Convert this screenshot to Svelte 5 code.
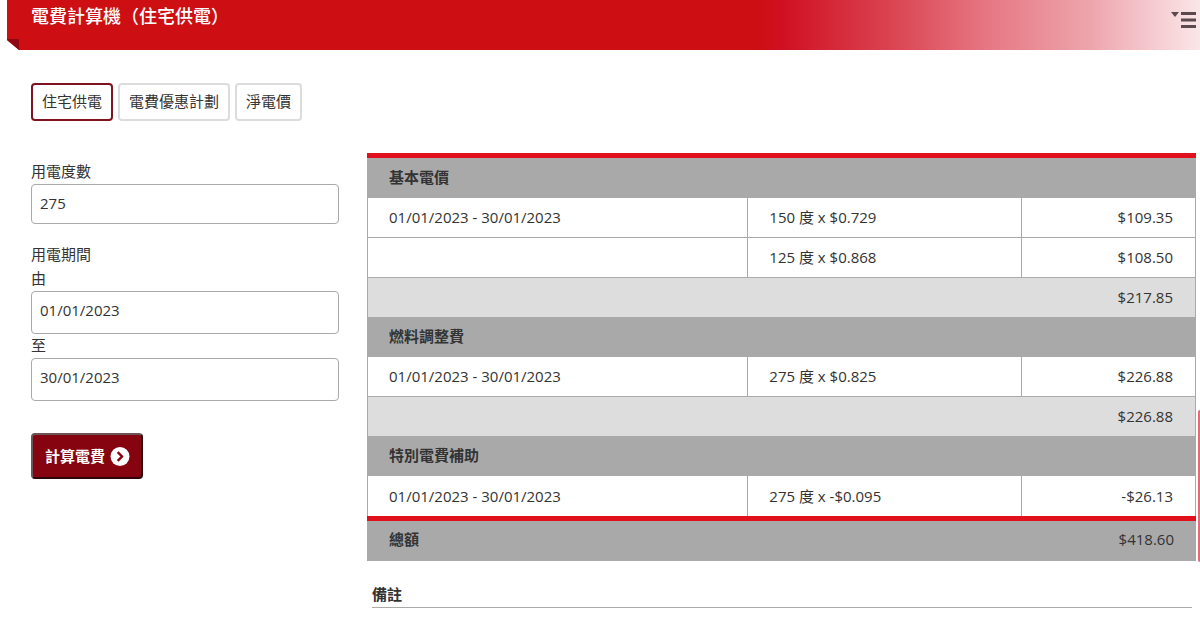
<script>
  const tabs = ['住宅供電', '電費優惠計劃', '淨電價'];
  let active = $state(0);
  let units = $state('275');
  let from = $state('01/01/2023');
  let to = $state('30/01/2023');

  const period = '01/01/2023 - 30/01/2023';
  const sections = [
    {
      title: '基本電價',
      rows: [
        [period, '150 度 x $0.729', '$109.35'],
        ['', '125 度 x $0.868', '$108.50']
      ],
      subtotal: '$217.85'
    },
    {
      title: '燃料調整費',
      rows: [[period, '275 度 x $0.825', '$226.88']],
      subtotal: '$226.88'
    },
    {
      title: '特別電費補助',
      rows: [[period, '275 度 x -$0.095', '-$26.13']],
      subtotal: null
    }
  ];
</script>

<header>
  <h1>電費計算機（住宅供電）</h1>
  <button class="menu" type="button" aria-label="選單">
    <svg width="26" height="18" viewBox="0 0 26 18" aria-hidden="true">
      <path d="M0 1h8L4 6z" fill="#5b4a4d" />
      <path d="M10 1h15v3H10zM10 7.5h15v3H10zM10 14h15v3H10z" fill="#5b4a4d" />
    </svg>
  </button>
</header>

<main>
  <nav>
    {#each tabs as tab, i}
      <button type="button" class="tab" class:active={active === i} onclick={() => (active = i)}>{tab}</button>
    {/each}
  </nav>

  <div class="columns">
    <form onsubmit={(e) => e.preventDefault()}>
      <div class="field">
        <label for="units">用電度數</label>
        <input id="units" type="text" bind:value={units} />
      </div>
      <fieldset>
        <legend>用電期間</legend>
        <label for="from">由</label>
        <input id="from" class="date" type="text" bind:value={from} />
        <label for="to">至</label>
        <input id="to" class="date" type="text" bind:value={to} />
      </fieldset>
      <button class="submit" type="submit">
        計算電費
        <svg width="20" height="20" viewBox="0 0 20 20" aria-hidden="true">
          <circle cx="10" cy="10.5" r="9.5" fill="#fff" />
          <path d="M7.7 6.1 12 10.5l-4.3 4.4" fill="none" stroke="#85040f" stroke-width="2.4" />
        </svg>
      </button>
    </form>

    <section>
      <table>
        <colgroup>
          <col class="c-period" />
          <col class="c-rate" />
          <col />
        </colgroup>
        {#each sections as s}
          <tbody>
            <tr class="head"><th colspan="3">{s.title}</th></tr>
            {#each s.rows as r}
              <tr class="row">
                <td>{r[0]}</td>
                <td>{r[1]}</td>
                <td class="amount">{r[2]}</td>
              </tr>
            {/each}
            {#if s.subtotal}
              <tr class="sub"><td colspan="3" class="amount">{s.subtotal}</td></tr>
            {/if}
          </tbody>
        {/each}
        <tfoot>
          <tr class="total">
            <th colspan="2">總額</th>
            <td class="amount">$418.60</td>
          </tr>
        </tfoot>
      </table>
      <h2>備註</h2>
    </section>
  </div>
</main>

<div class="side-tab"></div>

<style>
  :global(body) {
    background: #fff;
    color: #333;
    font: 15px/24px 'Open Sans', 'Noto Sans CJK TC', sans-serif;
    overflow: hidden;
  }
  :global(*) {
    box-sizing: border-box;
  }
  button,
  input {
    font: inherit;
    color: inherit;
  }
  header {
    position: relative;
    display: flex;
    justify-content: space-between;
    align-items: flex-start;
    height: 50px;
    margin-left: 7px;
    padding: 4px 3px 0 24px;
    background: linear-gradient(90deg, #cd0f14 0, #cd0f14 63%, #d01022 65%, #da4350 74%, #e67682 82%, #eea6ad 91%, #f4c3ca 95%, #fae6e7 100%);
    clip-path: polygon(0 0, 100% 0, 100% 100%, 12px 100%, 0 40px);
  }
  header::before {
    content: '';
    position: absolute;
    left: 0;
    bottom: 0;
    width: 12px;
    height: 11px;
    background: #8d0810;
  }
  h1 {
    margin: 0;
    color: #fff;
    font-size: 18px;
    font-weight: 500;
    line-height: 24px;
  }
  .menu {
    display: flex;
    margin-top: 7px;
    padding: 0;
    border: 0;
    background: none;
  }
  main {
    padding: 33px 4px 0 31px;
  }
  nav {
    display: flex;
    gap: 5px;
  }
  .tab {
    height: 38px;
    padding: 0 9px 2px;
    border: 2px solid #dcdcdc;
    border-radius: 4px;
    background: #fff;
    line-height: 24px;
  }
  .tab.active {
    border-color: #7e1220;
  }
  .columns {
    display: grid;
    grid-template-columns: 308fr 829fr;
    column-gap: 28px;
    margin-top: 32px;
  }
  form {
    padding-top: 7px;
  }
  .field {
    margin-bottom: 19px;
  }
  label,
  legend {
    display: block;
    padding: 0 0 2px;
    line-height: 22px;
  }
  input {
    display: block;
    width: 100%;
    height: 40px;
    padding: 0 8px 2px;
    border: 1px solid #aaa;
    border-radius: 4px;
    background: #fff;
  }
  .date {
    height: 43px;
    padding-bottom: 6px;
  }
  fieldset {
    margin: 0;
    padding: 0;
    border: 0;
  }
  .submit {
    display: flex;
    align-items: center;
    gap: 5px;
    height: 46px;
    margin-top: 32px;
    padding: 0 11px 1px 12px;
    border: 2px solid;
    border-color: #6b5558 #2e0508 #2e0508 #6b5558;
    border-radius: 4px;
    background: #85040f;
    color: #fff;
    font-weight: 700;
  }
  table {
    width: 100%;
    border-collapse: separate;
    border-spacing: 0;
    border-top: 5px solid #e0101c;
    table-layout: fixed;
  }
  .c-period {
    width: 46%;
  }
  .c-rate {
    width: 33%;
  }
  th,
  td {
    height: 40px;
    padding: 0 22px 2px;
    text-align: left;
    line-height: 24px;
  }
  .head th,
  .total > * {
    background: #a9a9a9;
  }
  .row td {
    padding-left: 21px;
    padding-bottom: 1px;
    border-right: 1px solid #aaa;
    border-bottom: 1px solid #aaa;
  }
  .row td:first-child,
  .sub td {
    border-left: 1px solid #aaa;
  }
  .sub td {
    height: 39px;
    border-right: 1px solid #aaa;
    background: #ddd;
  }
  tbody:last-of-type .row td {
    border-bottom: 0;
  }
  .total > * {
    height: 45px;
    padding-bottom: 4px;
    border-top: 5px solid #e0101c;
  }
  td.amount {
    text-align: right;
  }
  h2 {
    margin: 21px 4px 0 5px;
    padding-bottom: 1px;
    border-bottom: 1px solid #aaa;
    font-size: 15px;
    font-weight: 700;
    line-height: 24px;
  }
  .side-tab {
    position: fixed;
    right: 0;
    top: 410px;
    width: 2px;
    height: 152px;
    border-radius: 2px 0 0 2px;
    background: #e8687c;
  }
</style>
